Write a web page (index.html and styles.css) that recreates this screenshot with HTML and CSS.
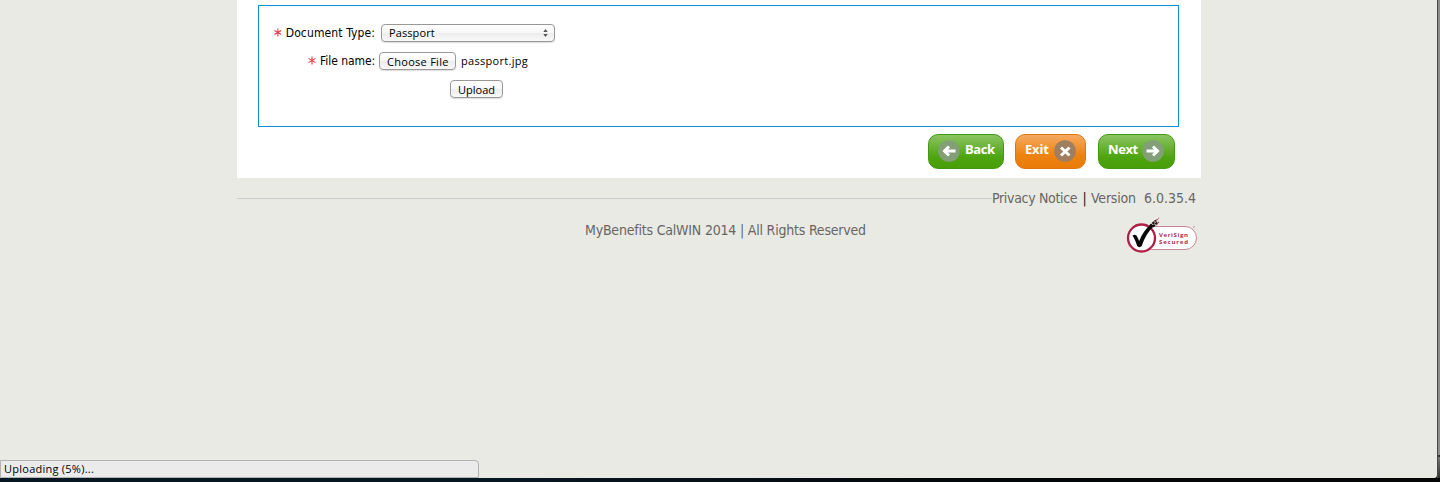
FILE: index.html
```html
<!DOCTYPE html>
<html lang="en">
<head>
<meta charset="utf-8">
<title>MyBenefits CalWIN</title>
<link rel="stylesheet" href="styles.css">
</head>
<body>
<div class="window">
  <div class="page">
    <main class="panel">
      <form class="upload">
        <div class="row">
          <label class="label"><svg class="star" viewBox="0 0 8 9"><path d="M4 .4v8.2M.5 2.4l7 4.2M7.5 2.4l-7 4.2"/></svg><span class="t-doc">Document Type:</span></label>
          <div class="control select"><span class="t-passport">Passport</span><svg width="5" height="8" viewBox="0 0 5 8"><path d="M2.500 0L4.700 3H.3zM2.500 8L4.700 5H.3z" fill="#555"/></svg></div>
        </div>
        <div class="row">
          <label class="label"><svg class="star" viewBox="0 0 8 9"><path d="M4 .4v8.2M.5 2.4l7 4.2M7.5 2.4l-7 4.2"/></svg><span class="t-file">File name:</span></label>
          <div class="control choose"><span class="t-choose">Choose File</span></div>
          <span class="filename">passport.jpg</span>
        </div>
        <div class="row">
          <div class="control submit"><span class="t-upload">Upload</span></div>
        </div>
      </form>
      <nav class="actions">
        <a class="btn back"><svg class="disc" viewBox="0 0 22 22"><circle cx="11" cy="11" r="10.800"/><path d="M17.500 11H7M11 6.500L6.500 11l4.500 4.500"/></svg><span>Back</span></a>
        <a class="btn exit"><span>Exit</span><svg class="disc" viewBox="0 0 22 22"><circle cx="11" cy="11" r="10.800"/><path d="M7 7.500l8.500 8M15.500 7.500l-8.500 8"/></svg></a>
        <a class="btn next"><span>Next</span><svg class="disc" viewBox="0 0 22 22"><circle cx="11" cy="11" r="10.800"/><path d="M4.500 11H15M11 6.500l4.500 4.500-4.500 4.500"/></svg></a>
      </nav>
    </main>
    <footer class="footer">
      <div class="links"><span class="rule"></span><span class="privacy">Privacy Notice</span><span class="bar">|</span><span class="version">Version</span><span class="number">6.0.35.4</span></div>
      <div class="legal">
        <span class="copyright">MyBenefits CalWIN 2014 | All Rights Reserved</span>
        <svg class="seal" width="72" height="38" viewBox="0 0 72 38">
          <rect x="14" y="9.500" width="56.500" height="23" rx="11.500" fill="#fff" stroke="#c48898"/>
          <circle cx="15.500" cy="21" r="13.500" fill="#fff" stroke="#b02048" stroke-width="2.300"/>
          <path d="M6.500 18.500c2-1.500 4-1 4.700 1.300l2 4.200C16 17 19.500 12 25 7l3 2c-5.500 5-9.500 11.500-12.300 20-1.300 1.500-3.500 1.500-4.500 0C10 25.500 8.500 21.500 6.500 18.500z" fill="#080808"/>
          <path d="M24 9l6-5.500M27 9.500l5-4.500" stroke="#111" stroke-width="2.200" stroke-dasharray="2.500 .8"/>
          <path d="M28 5.500l5-4.500M30 8l3-3" stroke="#a54058" stroke-width="1.200" stroke-dasharray="2 1"/>
          <text x="33" y="20" textLength="29">VeriSign</text>
          <text x="33" y="26.500" textLength="29">Secured</text>
          <circle cx="68" cy="10" r=".8" fill="none" stroke="#d29aaa" stroke-width=".6"/>
        </svg>
      </div>
    </footer>
  </div>
  <div class="status"><span>Uploading (5%)...</span></div>
</div>
<div class="edge"></div>
</body>
</html>
```
FILE: styles.css
```css
* { box-sizing: border-box; }
body {
  margin: 0;
  width: 1440px;
  height: 482px;
  overflow: hidden;
  display: grid;
  grid-template-columns: 1437px 3px;
  grid-template-rows: 478px;
  background: linear-gradient(90deg, #071722, #071722 500px, #030608 1000px, #050606);
  font-family: "DejaVu Sans Condensed", "DejaVu Sans", sans-serif;
  font-stretch: condensed;
  color: #000;
}
.window {
  display: flex;
  flex-direction: column;
  justify-content: space-between;
  background: #e9eae3;
  border-bottom-right-radius: 3px;
}
.edge {
  border-left: 1px solid #4a4b4a;
  background: linear-gradient(#8c8e8d 0 455px, #333 455px 457px, #777 457px, #333);
}
.page { width: 964px; margin-left: 237px; }
.panel { height: 178px; padding: 5px 22px 0 21px; background: #fff; }
.upload {
  height: 122px;
  padding: 18px 0 0 15px;
  border: 1px solid #0d93d2;
  display: flex;
  flex-direction: column;
  gap: 10px;
}
.row { display: flex; align-items: center; height: 18px; white-space: nowrap; }
.label {
  width: 101px;
  display: flex;
  justify-content: flex-end;
  align-items: center;
  gap: 4px;
  font-size: 12px;
  line-height: 18px;
}
.label span { padding-top: 1px; line-height: 17px; }
.star { width: 8px; height: 9px; margin-top: -1px; fill: none; stroke: #e43c42; stroke-width: 1.1; }
.t-doc { width: 90px; letter-spacing: .12px; }
.t-file { width: 55px; letter-spacing: -.05px; }
.control {
  height: 18px;
  border: 1px solid #999;
  border-radius: 4px;
  background: linear-gradient(#fff, #f7f7f7 50%, #ededed 51%, #f8f8f8);
  box-shadow: 0 1px 1px #ddd;
  display: flex;
  align-items: center;
  font: 11px/16px "Open Sans", sans-serif;
}
.select { width: 174px; margin-left: 6px; padding: 0 6px 0 7px; justify-content: space-between; }
.t-passport { letter-spacing: .1px; }
.choose { width: 77px; margin-left: 4px; padding: 1px 0 0 7px; }
.t-choose { letter-spacing: .28px; }
.filename { margin-left: 5px; font: 11px/16px "Open Sans", sans-serif; letter-spacing: .3px; }
.submit { width: 53px; margin-left: 176px; padding: 1px 0 0 7px; }
.actions { display: flex; justify-content: flex-end; gap: 12px; padding: 7px 4px 0 0; }
.btn {
  height: 35px;
  display: flex;
  border: 1px solid #419b10;
  border-radius: 10px;
  background: linear-gradient(#8cc464, #4da40f 68%, #489f0a);
  font: 700 13px/29px "Open Sans", sans-serif;
  letter-spacing: -.4px;
  color: #fff;
}
.back { width: 76px; padding-left: 9px; gap: 5px; margin-right: -1px; }
.exit { width: 71px; padding-left: 9px; border-color: #df760d; background: linear-gradient(#f5aa62, #ee8311 60%, #e97c08); }
.next { width: 77px; padding-left: 9px; }
.exit span { width: 29px; letter-spacing: -.2px; }
.next span { width: 34px; }
.disc { flex: none; width: 22px; height: 22px; margin-top: 5px; fill: #829f78; }
.exit .disc { fill: #9f7e62; }
.disc path { fill: none; stroke: #fff; stroke-width: 3; }
.footer { color: #666; font-size: 14px; white-space: nowrap; }
.links { display: flex; align-items: center; height: 40px; padding-right: 5px; }
.rule { flex: 1; height: 1px; background: #cdcdce; }
.privacy { width: 86px; letter-spacing: -.33px; }
.bar { width: 13px; text-align: center; color: #222; }
.version { width: 53px; letter-spacing: -.2px; }
.number { width: 52px; letter-spacing: 0; }
.legal { display: flex; justify-content: space-between; padding: 0 3px 0 348px; }
.copyright { line-height: 24px; letter-spacing: -.2px; }
.seal { margin-top: -1px; }
.seal text { font: 700 6px "Open Sans", sans-serif; fill: #ad2e52; }
.status {
  width: 479px;
  height: 18px;
  padding-left: 3px;
  border: 1px solid #b1b2b1;
  border-radius: 0 4px 0 0;
  background: #ebebeb;
  font: 11px/16px "Open Sans", sans-serif;
  letter-spacing: .25px;
}
```
